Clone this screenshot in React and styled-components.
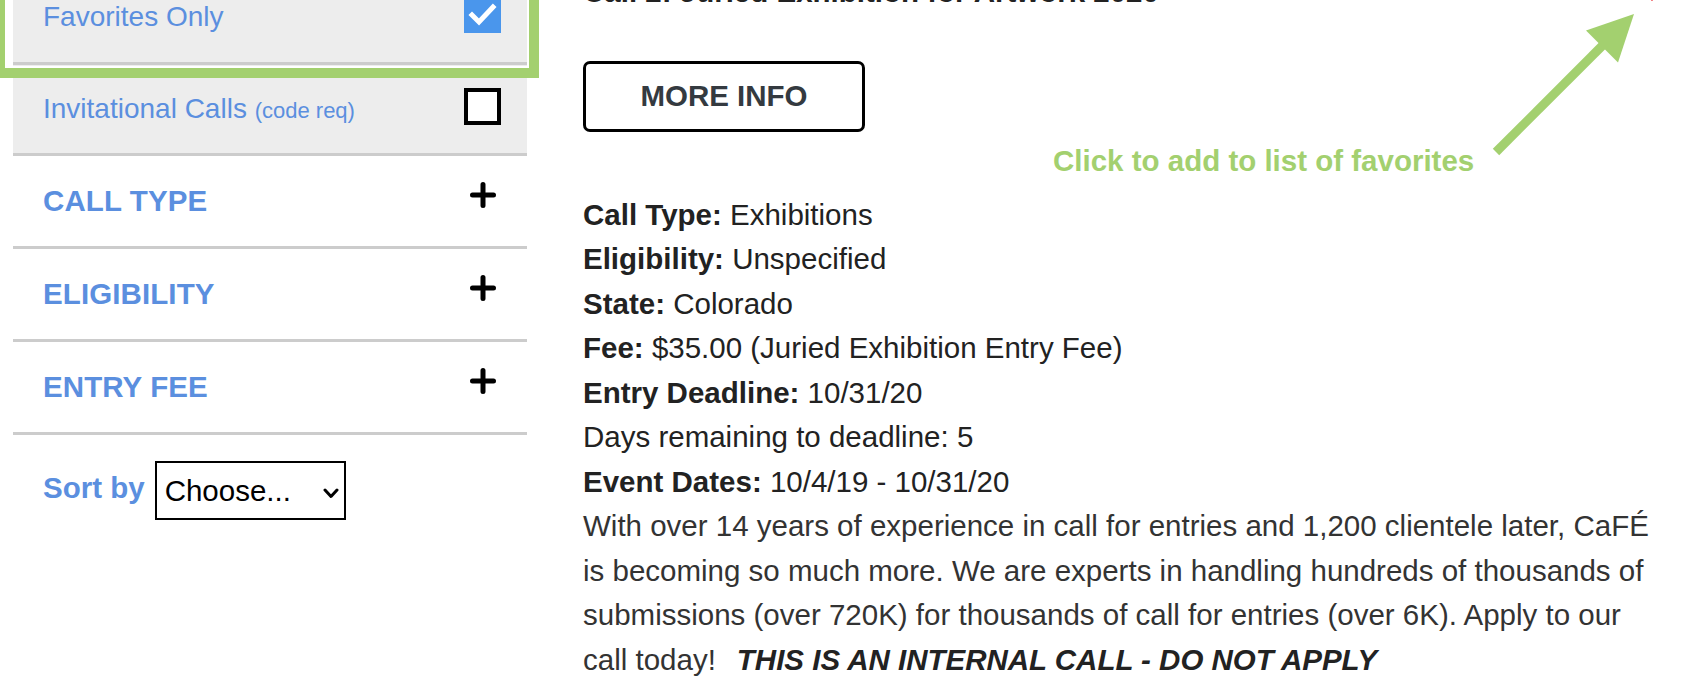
import styled, { createGlobalStyle } from 'styled-components';

const GlobalStyle = createGlobalStyle`
  html, body {
    margin: 0;
    padding: 0;
    background: #fff;
  }
  body {
    font-family: "Liberation Sans", Arial, Helvetica, sans-serif;
    overflow: hidden;
  }
`;

const BLUE = '#5b8fdf';
const GREEN = '#a3d06f';

// page is shown scrolled down a bit, so the top of everything sits above the fold
const PageWrap = styled.div`
  position: relative;
  display: flex;
  align-items: flex-start;
  gap: 56px;
  padding-left: 13px;
  margin-top: -28px;
`;

// Sidebar

const SidebarPanel = styled.aside`
  position: relative;
  width: 514px;
  flex-shrink: 0;
`;

const FilterRow = styled.div`
  display: flex;
  align-items: center;
  justify-content: space-between;
  height: ${({ h }) => h}px;
  padding: 0 26px 0 30px;
  background: ${({ shaded }) => (shaded ? '#ededed' : 'transparent')};
  border-bottom: 3px solid #cccccc;
`;

const CheckLabel = styled.span`
  font-size: 28px;
  color: ${BLUE};
`;

const SmallNote = styled.span`
  font-size: 22px;
`;

const Heading = styled.span`
  font-size: 29.5px;
  font-weight: bold;
  color: ${BLUE};
  letter-spacing: 0.1px;
`;

const IconSlot = styled.div`
  width: 37px;
  display: flex;
  justify-content: center;
  margin-bottom: ${({ lift }) => lift}px;
`;

const CheckBox = styled.div`
  box-sizing: border-box;
  width: 37px;
  height: 37px;
  background: ${({ checked }) => (checked ? '#4a96ec' : '#fff')};
  border: ${({ checked }) => (checked ? 'none' : '4px solid #000')};
  display: flex;
  align-items: center;
  justify-content: center;
`;

const Highlight = styled.div`
  position: absolute;
  left: -18px;
  top: -10px;
  width: 544px;
  height: 116px;
  box-sizing: border-box;
  border: 10px solid ${GREEN};
  box-shadow: inset 0 0 0 2px #fff;
  pointer-events: none;
`;

const SortRow = styled.div`
  display: flex;
  align-items: center;
  gap: 10px;
  padding-left: 30px;
  margin-top: 26px;
`;

const SortLabel = styled.span`
  font-size: 29.5px;
  font-weight: bold;
  color: ${BLUE};
  margin-top: -6px;
`;

const SelectWrap = styled.div`
  position: relative;
  width: 191px;
  height: 59px;
`;

const SortSelect = styled.select`
  appearance: none;
  -webkit-appearance: none;
  box-sizing: border-box;
  width: 100%;
  height: 100%;
  border: 2px solid #000;
  border-radius: 0;
  background: #fff;
  color: #000;
  font-family: "Liberation Sans", Arial, sans-serif;
  font-size: 29.5px;
  padding: 0 0 0 8px;
  outline: none;
`;

const Chevron = styled.svg`
  position: absolute;
  right: 7px;
  top: 50%;
  margin-top: -3px;
  pointer-events: none;
`;

const Check = () => (
  <svg width="37" height="37" viewBox="0 0 37 37">
    <path d="M8 19 L15 26 L29 11" fill="none" stroke="#fff" strokeWidth="5" strokeLinecap="square" />
  </svg>
);

const Plus = () => (
  <svg width="26" height="26" viewBox="0 0 26 26">
    <path d="M13 2.5 V23.5 M2.5 13 H23.5" stroke="#000" strokeWidth="5" strokeLinecap="round" />
  </svg>
);

const CheckRow = ({ h, checked, children }) => (
  <FilterRow h={h} shaded>
    <CheckLabel>{children}</CheckLabel>
    <IconSlot lift={5}>
      <CheckBox checked={checked}>{checked && <Check />}</CheckBox>
    </IconSlot>
  </FilterRow>
);

const AccordionRow = ({ title }) => (
  <FilterRow h={90}>
    <Heading>{title}</Heading>
    <IconSlot lift={12}>
      <Plus />
    </IconSlot>
  </FilterRow>
);

const Sidebar = () => (
  <SidebarPanel>
    <CheckRow h={90} checked>Favorites Only</CheckRow>
    <CheckRow h={88}>
      Invitational Calls <SmallNote>(code req)</SmallNote>
    </CheckRow>
    <AccordionRow title="CALL TYPE" />
    <AccordionRow title="ELIGIBILITY" />
    <AccordionRow title="ENTRY FEE" />
    <SortRow>
      <SortLabel>Sort by</SortLabel>
      <SelectWrap>
        <SortSelect defaultValue="">
          <option value="">Choose...</option>
          <option value="deadline">Deadline</option>
          <option value="fee">Entry Fee</option>
        </SortSelect>
        <Chevron width="16" height="11" viewBox="0 0 16 11">
          <path d="M2 2 L8 8.5 L14 2" fill="none" stroke="#000" strokeWidth="3" strokeLinecap="round" strokeLinejoin="round" />
        </Chevron>
      </SelectWrap>
    </SortRow>
    <Highlight />
  </SidebarPanel>
);

// Call listing

const MainColumn = styled.main`
  width: 1081px;
  flex-shrink: 0;
  color: #222;
  font-size: 29.5px;
  line-height: 44.5px;
`;

const TitleRow = styled.div`
  display: flex;
  align-items: flex-start;
  justify-content: space-between;
  margin-top: -2px;
`;

const CallTitle = styled.h2`
  margin: 0;
  font-size: 29.5px;
  font-weight: bold;
  line-height: 44.5px;
  color: #222;
`;

const HeartIcon = styled.svg`
  margin-top: 10px;
  flex-shrink: 0;
`;

const InfoButton = styled.button`
  display: block;
  box-sizing: border-box;
  width: 282px;
  height: 71px;
  margin-top: 46px;
  border: 3px solid #000;
  border-radius: 7px;
  background: #fff;
  color: #343a40;
  font-family: "Liberation Sans", Arial, sans-serif;
  font-size: 29.5px;
  font-weight: bold;
  cursor: pointer;
`;

const Details = styled.div`
  margin-top: 61px;
`;

const DetailLine = styled.div`
  white-space: nowrap;
`;

const Description = styled.p`
  margin: 0;
  max-width: 1076px;
  color: #333;
`;

const Warning = styled.b`
  font-style: italic;
  color: #222;
  padding-left: 21px;
`;

const Hint = styled.div`
  position: absolute;
  left: 1053px;
  top: 167px;
  font-size: 29.5px;
  line-height: 44.5px;
  font-weight: bold;
  color: ${GREEN};
  white-space: nowrap;
`;

const Arrow = styled.svg`
  position: absolute;
  left: 1480px;
  top: 28px;
  pointer-events: none;
`;

const details = [
  ['Call Type:', 'Exhibitions'],
  ['Eligibility:', 'Unspecified'],
  ['State:', 'Colorado'],
  ['Fee:', '$35.00 (Juried Exhibition Entry Fee)'],
  ['Entry Deadline:', '10/31/20'],
  [null, 'Days remaining to deadline: 5'],
  ['Event Dates:', '10/4/19 - 10/31/20'],
];

const CallListing = () => (
  <MainColumn>
    <TitleRow>
      <CallTitle>Call 2: Juried Exhibition for Artwork 2020</CallTitle>
      <HeartIcon width="24" height="22" viewBox="0 0 24 22">
        <path
          d="M12 21.35l-1.45-1.32C5.4 15.36 2 12.28 2 8.5 2 5.42 4.42 3 7.5 3c1.74 0 3.41.81 4.5 2.09C13.09 3.81 14.76 3 16.5 3 19.58 3 22 5.42 22 8.5c0 3.78-3.4 6.86-8.55 11.54L12 21.35z"
          transform="translate(0 -0.35)"
          fill="#e8262b"
        />
      </HeartIcon>
    </TitleRow>
    <InfoButton>MORE INFO</InfoButton>
    <Details>
      {details.map(([label, value]) => (
        <DetailLine key={value}>
          {label && <b>{label}</b>} {value}
        </DetailLine>
      ))}
      <Description>
        With over 14 years of experience in call for entries and 1,200 clientele later, CaFÉ is becoming
        so much more. We are experts in handling hundreds of thousands of submissions (over 720K) for
        thousands of call for entries (over 6K). Apply to our call today!
        <Warning>THIS IS AN INTERNAL CALL - DO NOT APPLY</Warning>
      </Description>
    </Details>
  </MainColumn>
);

export default function App() {
  return (
    <>
      <GlobalStyle />
      <PageWrap>
        <Sidebar />
        <CallListing />
        <Hint>Click to add to list of favorites</Hint>
        <Arrow width="170" height="170" viewBox="0 0 170 170">
          <line x1="16" y1="152" x2="125" y2="43" stroke={GREEN} strokeWidth="9" />
          <polygon points="154,14 106,30.5 138,62.5" fill={GREEN} />
        </Arrow>
      </PageWrap>
    </>
  );
}
